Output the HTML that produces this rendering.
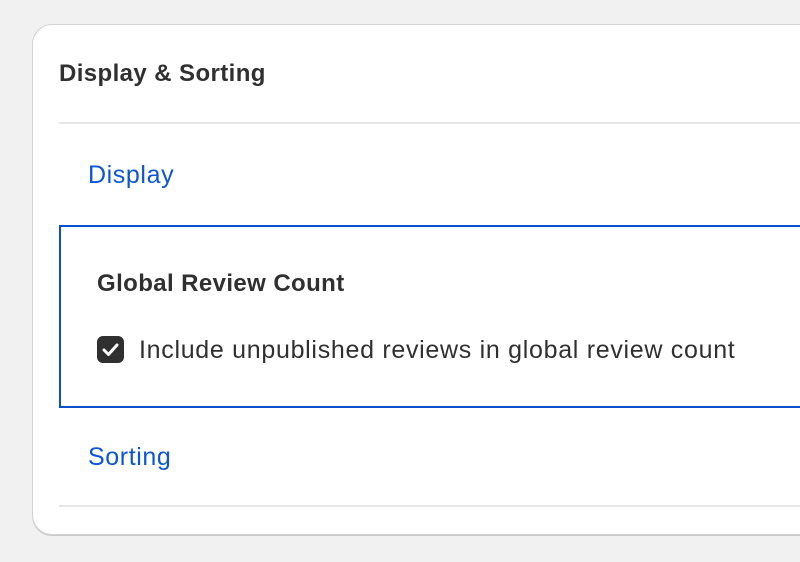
<!DOCTYPE html>
<html><head><style>
body{margin:0;width:800px;height:562px;background:#f1f1f1;font-family:"Liberation Sans",sans-serif;overflow:hidden;position:relative;color:#303030}
.card{position:absolute;left:32px;top:24px;width:820px;height:509px;background:#fff;border:1px solid #d4d4d4;border-radius:20px;box-shadow:0 1px 0 #c8c8c8}
.t{position:absolute;white-space:nowrap}
.hr{position:absolute;left:59px;width:760px;height:2px;background:#e6e6e6}
.box{position:absolute;left:59px;top:225px;width:800px;height:179px;border:2px solid #0b4fce;border-right:none;box-sizing:content-box}
.blue{color:#0b56d6;font-size:25px;letter-spacing:0.6px}
</style></head><body>
<div class="card"></div>
<div class="t" style="left:59px;top:60px;font-size:24px;font-weight:bold;letter-spacing:0.4px">Display &amp; Sorting</div>
<div class="hr" style="top:122px"></div>
<div class="t blue" style="left:88px;top:161px">Display</div>
<div class="box"></div>
<div class="t" style="left:97px;top:270px;font-size:24px;font-weight:bold;letter-spacing:0.4px">Global Review Count</div>
<div style="position:absolute;left:97px;top:336px;width:27px;height:27px;background:#303030;border-radius:6px">
<svg width="27" height="27" viewBox="0 0 27 27"><path d="M7 14 L11.5 18.5 L20 9" fill="none" stroke="#fff" stroke-width="3" stroke-linecap="round" stroke-linejoin="round"/></svg></div>
<div class="t" style="left:139px;top:336px;font-size:25px;letter-spacing:0.7px">Include unpublished reviews in global review count</div>
<div class="t blue" style="left:88px;top:443px">Sorting</div>
<div class="hr" style="top:505px"></div>
</body></html>
